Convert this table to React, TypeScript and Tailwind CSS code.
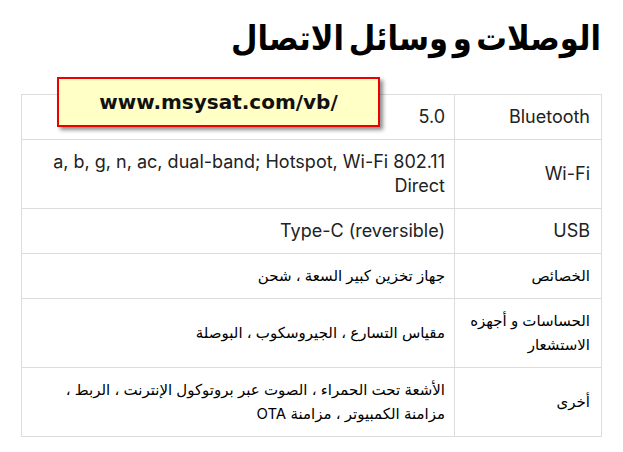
const ROWS: { label: React.ReactNode; value: React.ReactNode; arabic?: boolean }[] = [
  { label: 'Bluetooth', value: '5.0' },
  { label: 'Wi-Fi', value: 'a, b, g, n, ac, dual-band; Hotspot, Wi-Fi 802.11 Direct' },
  { label: 'USB', value: 'Type-C (reversible)' },
  { label: 'الخصائص', value: 'جهاز تخزين كبير السعة ، شحن', arabic: true },
  {
    label: (
      <>
        الحساسات و أجهزه
        <br />
        الاستشعار
      </>
    ),
    value: 'مقياس التسارع ، الجيروسكوب ، البوصلة',
    arabic: true,
  },
  {
    label: 'أخرى',
    value: (
      <>
        الأشعة تحت الحمراء ، الصوت عبر بروتوكول الإنترنت ، الربط ،
        <br />
        مزامنة الكمبيوتر ، مزامنة OTA
      </>
    ),
    arabic: true,
  },
]

export default function App() {
  return (
    <div
      dir="rtl"
      className="relative w-[623px] h-[452px] bg-white text-[#222]"
      style={{ fontFamily: 'Inter, "DejaVu Sans", sans-serif' }}
    >
      <h1 className="pt-[10px] pr-[22px] h-[94px] text-[34px] font-bold leading-[56px] text-black [font-family:'DejaVu_Sans_Condensed','DejaVu_Sans',sans-serif] tracking-[-1px] [word-spacing:-6px]">
        الوصلات و وسائل الاتصال
      </h1>

      <div className="px-[21px]">
        <table className="w-full border-collapse text-[18px] leading-[24px]">
          <tbody>
            {ROWS.map((row, i) => (
              <tr key={i}>
                <td
                  className={`w-[147px] whitespace-nowrap border border-[#dcdcdc] px-[11px] py-[10px] align-middle text-right ${
                    row.arabic ? 'text-[15px] text-black' : ''
                  }`}
                >
                  {row.label}
                </td>
                <td
                  className={`border border-[#dcdcdc] pl-[10px] pr-[9px] py-[10px] align-middle text-right ${
                    row.arabic ? 'text-[15px] text-black' : ''
                  }`}
                >
                  {row.value}
                </td>
              </tr>
            ))}
          </tbody>
        </table>
      </div>

      <div
        dir="ltr"
        className="absolute left-[57px] top-[77px] w-[323px] h-[50px] flex items-center justify-center bg-[#ffffc6] border-2 border-[#ee0000] shadow-[3px_3px_4px_rgba(0,0,0,0.45)] text-[20px] font-bold text-[#111] [font-family:'DejaVu_Sans',sans-serif]"
      >
        www.msysat.com/vb/
      </div>
    </div>
  )
}
